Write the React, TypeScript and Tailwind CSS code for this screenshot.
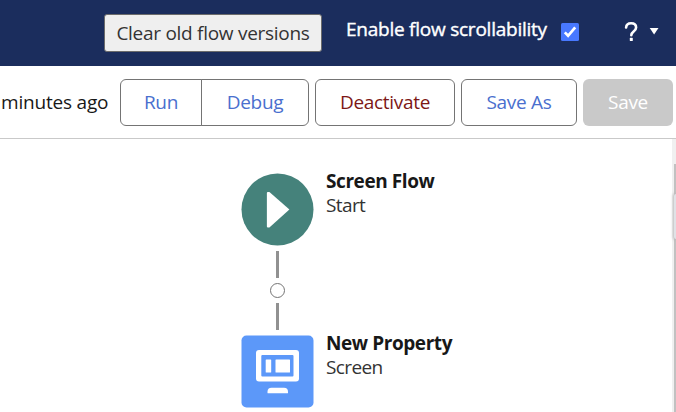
import React from 'react';

const labelFont = "font-['Open_Sans','Noto_Sans',sans-serif]";

function Header() {
  return (
    <header className="flex h-[66px] items-start bg-[#1b2d5d] pl-[104px] text-white">
      <button className="mt-[14px] flex h-[38px] w-[218px] items-center justify-center whitespace-nowrap rounded-[3px] border border-[#6b6b6b] bg-[#efefef] text-[19px] tracking-[-0.28px] text-[#333]">
        Clear old flow versions
      </button>
      <label className="ml-6 mt-[15px] flex w-[215px] items-start whitespace-nowrap text-[19px] leading-7 tracking-[-0.24px] [-webkit-text-stroke:0.4px_white]">
        Enable flow scrollability
      </label>
      <svg className="mt-[23px] shrink-0" width="18" height="18" viewBox="0 0 18 18">
        <rect width="18" height="18" rx="1.5" fill="#4878ff" />
        <path d="M3.8 9.4 7.1 12.8 14.2 4.4" fill="none" stroke="#fff" strokeWidth="2.7" />
      </svg>
      <svg className="ml-[45px] mt-[21px] shrink-0" width="36" height="22" viewBox="0 0 36 22">
        <path
          d="M2.1 6.5C2.3 3.7 4.4 2.2 7.1 2.2c3 0 5 1.6 5 4.2 0 4.2-4.8 3.9-4.8 7.8"
          fill="none"
          stroke="#fff"
          strokeWidth="2.6"
          strokeLinecap="round"
        />
        <rect x="5.8" y="16.8" width="3" height="3.3" rx="0.6" fill="#fff" />
        <path d="M25.7 7h8.8L30.1 13.4z" fill="#fff" />
      </svg>
    </header>
  );
}

function Toolbar() {
  const base = 'flex h-[47px] items-center justify-center whitespace-nowrap border border-[#747474]';
  return (
    <div className="flex h-[73px] items-start border-b border-[#c9c9c9] bg-white pt-[13px] text-[19px] tracking-[-0.3px] text-[#4a6fce]">
      <span className="w-[119px] shrink-0 whitespace-nowrap pl-px pt-[9px] leading-7 tracking-[-0.2px] text-[#181818]">
        minutes ago
      </span>
      <div className="ml-px flex">
        <button className={`${base} w-[82px] rounded-l-md`}>Run</button>
        <button className={`${base} -ml-px w-[108px] rounded-r-md`}>Debug</button>
      </div>
      <button className={`${base} ml-1.5 w-[140px] rounded-md text-[#7d1715]`}>Deactivate</button>
      <button className={`${base} ml-1.5 w-[116px] rounded-md`}>Save As</button>
      <button className="ml-1.5 flex h-[47px] w-[90px] items-center justify-center rounded-md bg-[#c9c9c9] text-white">
        Save
      </button>
    </div>
  );
}

function NodeLabel({ title, kind }: { title: string; kind: string }) {
  return (
    <div className="-mt-1 ml-3 whitespace-nowrap text-[19px] leading-6 text-[#333]">
      <div className="font-bold tracking-[-0.42px] text-[#181818]">{title}</div>
      <div className="tracking-[-0.6px]">{kind}</div>
    </div>
  );
}

function Connector() {
  return (
    <div className="flex h-[90px] w-[73px] flex-col items-center pt-[6px]">
      <div className="h-[27px] w-[3px] bg-[#919191]" />
      <div className="my-[5px] h-[15px] w-[15px] shrink-0 rounded-full border border-[#747474]" />
      <div className="h-[27px] w-[3px] bg-[#919191]" />
    </div>
  );
}

function Canvas() {
  return (
    <main className="flex h-[273px] bg-white">
      <div className="w-[672px] pl-[241px] pt-[34px]">
        <div className="flex h-[72px]">
          <svg width="73" height="73" viewBox="0 0 73 73">
            <circle cx="36.5" cy="36.5" r="36" fill="#45827b" />
            <path d="M26.5 18.5h1.5L48 36 28 54h-1.5q-1 0-1-1V19.5q0-1 1-1z" transform="translate(.4 .5)" fill="#fff" />
          </svg>
          <NodeLabel title="Screen Flow" kind="Start" />
        </div>
        <Connector />
        <div className="flex h-[72px]">
          <svg width="73" height="73" viewBox="0 0 73 73">
            <g transform="translate(.5 .5)">
              <rect width="72" height="72" rx="5" fill="#5c98f9" />
              <rect x="14.5" y="14.5" width="43" height="31.5" rx="3" fill="#fff" />
              <rect x="19.8" y="19.5" width="32.2" height="21.5" rx="1" fill="#5c98f9" />
              <rect x="24.2" y="24" width="5.5" height="13" rx="0.6" fill="#fff" />
              <rect x="34" y="24" width="14.5" height="13" rx="0.6" fill="#fff" />
              <path d="M26 57.2v-1q0-4 4-4h12.5q4 0 4 4v1q0 .5-.6.5H26.6q-.6 0-.6-.5z" fill="#fff" />
            </g>
          </svg>
          <NodeLabel title="New Property" kind="Screen" />
        </div>
      </div>
      <div className="w-1 bg-[#f0f0f0] pl-0.5 pt-[25px]">
        <div className="h-[248px] bg-[#c1c1c1] pt-[30px]">
          <div className="h-[45px] rounded-l-[3px] bg-[#e0e2e6] shadow-[0_0_3px_1px_#bbbbbb]" />
        </div>
      </div>
    </main>
  );
}

export default function App() {
  return (
    <div className={`h-[412px] w-[676px] overflow-hidden bg-white ${labelFont}`}>
      <Header />
      <Toolbar />
      <Canvas />
    </div>
  );
}
